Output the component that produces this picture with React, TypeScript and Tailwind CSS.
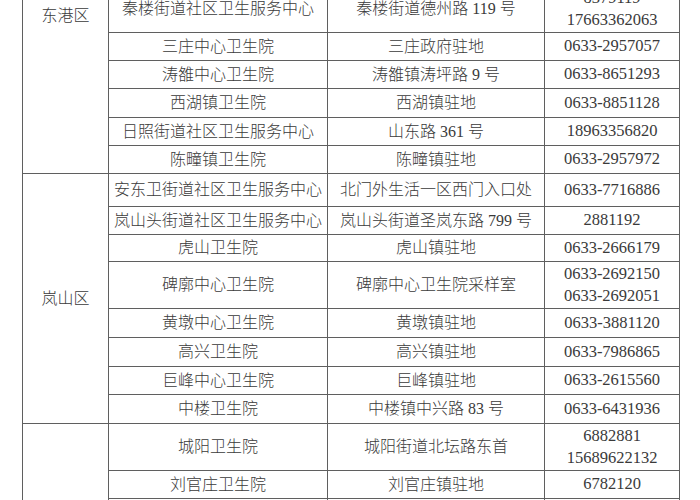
import React from 'react';

type Row = {
    name: string;
    addr: string;
    phones: string[];
    h: number;
    group?: { label: string; span: number; labelClass: string };
};

const rows: Row[] = [
    { name: '秦楼街道社区卫生服务中心', addr: '秦楼街道德州路 119 号', phones: ['8379119', '17663362063'], h: 47, group: { label: '东港区', span: 6, labelClass: 'align-top pt-[18px]' } },
    { name: '三庄中心卫生院', addr: '三庄政府驻地', phones: ['0633-2957057'], h: 28 },
    { name: '涛雒中心卫生院', addr: '涛雒镇涛坪路 9 号', phones: ['0633-8651293'], h: 28 },
    { name: '西湖镇卫生院', addr: '西湖镇驻地', phones: ['0633-8851128'], h: 29 },
    { name: '日照街道社区卫生服务中心', addr: '山东路 361 号', phones: ['18963356820'], h: 28 },
    { name: '陈疃镇卫生院', addr: '陈疃镇驻地', phones: ['0633-2957972'], h: 28 },
    { name: '安东卫街道社区卫生服务中心', addr: '北门外生活一区西门入口处', phones: ['0633-7716886'], h: 33, group: { label: '岚山区', span: 8, labelClass: 'align-middle' } },
    { name: '岚山头街道社区卫生服务中心', addr: '岚山头街道圣岚东路 799 号', phones: ['2881192'], h: 28 },
    { name: '虎山卫生院', addr: '虎山镇驻地', phones: ['0633-2666179'], h: 27 },
    { name: '碑廓中心卫生院', addr: '碑廓中心卫生院采样室', phones: ['0633-2692150', '0633-2692051'], h: 47 },
    { name: '黄墩中心卫生院', addr: '黄墩镇驻地', phones: ['0633-3881120'], h: 29 },
    { name: '高兴卫生院', addr: '高兴镇驻地', phones: ['0633-7986865'], h: 29 },
    { name: '巨峰中心卫生院', addr: '巨峰镇驻地', phones: ['0633-2615560'], h: 28 },
    { name: '中楼卫生院', addr: '中楼镇中兴路 83 号', phones: ['0633-6431936'], h: 29 },
    { name: '城阳卫生院', addr: '城阳街道北坛路东首', phones: ['6882881', '15689622132'], h: 47, group: { label: '', span: 3, labelClass: 'align-middle' } },
    { name: '刘官庄卫生院', addr: '刘官庄镇驻地', phones: ['6782120'], h: 28 },
    { name: '', addr: '', phones: [''], h: 28 },
];

const cell = 'border border-[#5f5f5f] text-center align-middle whitespace-nowrap p-0';

export default function App() {
    return (
        <div className="w-[700px] h-[500px] overflow-hidden bg-white text-[#3a3a3a]" style={{ fontFamily: '"Liberation Serif", "Noto Sans CJK SC", serif' }}>
            <table className="ml-[22px] mt-[-15px] border-collapse table-fixed w-[657px] text-[16px] font-light leading-[24px]">
                <colgroup>
                    <col className="w-[86px]" />
                    <col className="w-[219px]" />
                    <col className="w-[217px]" />
                    <col className="w-[135px]" />
                </colgroup>
                <tbody>
                    {rows.map((r, i) => (
                        <tr key={i} style={{ height: r.h }}>
                            {r.group && (
                                <td rowSpan={r.group.span} className={`border border-[#5f5f5f] text-center whitespace-nowrap p-0 ${r.group.labelClass}`}>
                                    {r.group.label}
                                </td>
                            )}
                            <td className={cell}>{r.name}</td>
                            <td className={cell}>{r.addr}</td>
                            <td className={`${cell} text-[16.5px] leading-[22.5px]`}>
                                {r.phones.map((p, j) => (
                                    <div key={j}>{p}</div>
                                ))}
                            </td>
                        </tr>
                    ))}
                </tbody>
            </table>
        </div>
    );
}
